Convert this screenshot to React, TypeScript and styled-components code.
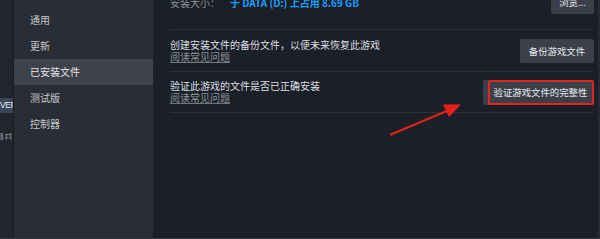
import React from "react";
import styled, { createGlobalStyle } from "styled-components";

const Global = createGlobalStyle`
  html, body { margin: 0; padding: 0; background: #1b1f27; }
  body { font-family: "Noto Sans CJK SC", "Noto Sans", sans-serif; }
  * { box-sizing: border-box; }
`;

const Root = styled.div`
  position: relative;
  width: 600px;
  height: 239px;
  display: flex;
  overflow: hidden;
  background: #1b1f27;
  border-bottom: 1px solid #343944;
`;

const BackStrip = styled.div`
  width: 14px;
  flex: none;
  background: #22252c;
  border-right: 1px solid #1a1c21;
  padding-top: 98px;
  display: flex;
  flex-direction: column;
  overflow: hidden;
`;

const BackItem = styled.div<{ $active?: boolean }>`
  height: 15px;
  line-height: 15px;
  font-family: "Liberation Sans", Arial, sans-serif;
  font-size: 8.5px;
  letter-spacing: -0.4px;
  white-space: nowrap;
  overflow: hidden;
  color: ${(p) => (p.$active ? "#e4e8ee" : "#9aa0a8")};
  background: ${(p) => (p.$active ? "#3b4658" : "transparent")};
  margin-bottom: ${(p) => (p.$active ? "17px" : "0")};
`;

const Sidebar = styled.nav`
  width: 139px;
  flex: none;
  background: #2a2d35;
  padding-top: 7px;
  display: flex;
  flex-direction: column;
`;

const NavItem = styled.div<{ $active?: boolean }>`
  height: 26px;
  line-height: 26px;
  padding-left: 16px;
  font-size: 10px;
  color: ${(p) => (p.$active ? "#e6e8eb" : "#c3c7cd")};
  background: ${(p) => (p.$active ? "#3d424c" : "transparent")};
`;

const Main = styled.main`
  flex: 1;
  padding: 0 4px 0 17px;
  display: flex;
  flex-direction: column;
  border-right: 2px solid #262a32;
`;

const Row = styled.div<{ $h: number; $top?: number }>`
  height: ${(p) => p.$h}px;
  margin-top: ${(p) => p.$top ?? 0}px;
  display: flex;
  align-items: center;
  justify-content: space-between;
  border-bottom: 1px solid #2b3039;
`;

const TextCol = styled.div`
  display: flex;
  flex-direction: column;
`;

const Desc = styled.div`
  font-size: 10px;
  line-height: 12px;
  color: #dcdfe3;
`;

const Faq = styled.a`
  font-size: 10px;
  line-height: 12px;
  color: #8d939b;
  text-decoration: underline;
  text-decoration-color: #6f757d;
  text-underline-offset: 1px;
`;

const SizeLine = styled.div`
  font-size: 10px;
  color: #8b9199;
  display: flex;
  gap: 10px;
`;

const SizeValue = styled.span`
  color: #1a9fff;
  font-weight: 700;
`;

const Button = styled.button<{ $w: number; $h: number }>`
  position: relative;
  width: ${(p) => p.$w}px;
  height: ${(p) => p.$h}px;
  border: none;
  border-radius: 2px;
  background: #3a3f4a;
  color: #e8eaed;
  font-family: "Noto Sans CJK SC", "Noto Sans", sans-serif;
  font-size: 9.4px;
  padding: 0;
  display: flex;
  align-items: center;
  justify-content: center;
`;

const ButtonLabel = styled.span<{ $shift?: number }>`
  padding-left: ${(p) => p.$shift ?? 0}px;
`;

const Highlight = styled.span`
  position: absolute;
  left: 5px;
  right: 0;
  top: 0;
  bottom: 0;
  border: 2px solid #e5231f;
  border-radius: 2px;
`;

const ArrowLayer = styled.svg`
  position: absolute;
  left: 0;
  top: 0;
  pointer-events: none;
`;

export default function App() {
  return (
    <>
      <Global />
      <Root>
        <BackStrip>
          <BackItem $active>VEF</BackItem>
          <BackItem>ll Fl</BackItem>
        </BackStrip>
        <Sidebar>
          <NavItem>通用</NavItem>
          <NavItem>更新</NavItem>
          <NavItem $active>已安装文件</NavItem>
          <NavItem>测试版</NavItem>
          <NavItem>控制器</NavItem>
        </Sidebar>
        <Main>
          <Row $h={55} $top={-25}>
            <SizeLine>
              <span>安装大小：</span>
              <SizeValue>于 DATA (D:) 上占用 8.69 GB</SizeValue>
            </SizeLine>
            <Button $w={43} $h={24}>浏览...</Button>
          </Row>
          <Row $h={42}>
            <TextCol>
              <Desc>创建安装文件的备份文件，以便未来恢复此游戏</Desc>
              <Faq>阅读常见问题</Faq>
            </TextCol>
            <Button $w={74} $h={24}>备份游戏文件</Button>
          </Row>
          <Row $h={41}>
            <TextCol>
              <Desc>验证此游戏的文件是否已正确安装</Desc>
              <Faq>阅读常见问题</Faq>
            </TextCol>
            <Button $w={111} $h={25}>
              <ButtonLabel $shift={4}>验证游戏文件的完整性</ButtonLabel>
              <Highlight />
            </Button>
          </Row>
        </Main>
        <ArrowLayer width="600" height="239" viewBox="0 0 600 239">
          <line x1="391" y1="134.5" x2="448" y2="110.5" stroke="#e8201c" strokeWidth="2.2" strokeLinecap="round" />
          <polygon points="461,104.5 443,104.5 449,117" fill="#e8201c" />
        </ArrowLayer>
      </Root>
    </>
  );
}
